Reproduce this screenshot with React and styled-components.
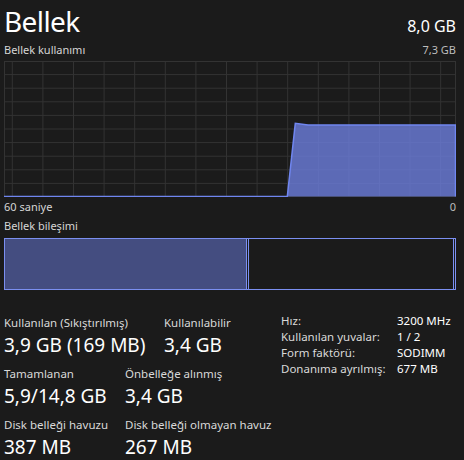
import React from 'react';
import styled, { createGlobalStyle } from 'styled-components';

const GlobalStyle = createGlobalStyle`
  html, body {
    margin: 0;
    background: #1b1b1b;
  }
  body {
    font-family: "Noto Sans", "Open Sans", sans-serif;
    color: #ffffff;
  }
`;

const Panel = styled.div`
  width: 464px;
  height: 460px;
  box-sizing: border-box;
  padding: 0 8px 0 4px;
  background: #1b1b1b;
  overflow: hidden;
`;

const Header = styled.div`
  display: flex;
  justify-content: space-between;
  align-items: baseline;
  height: 40px;
  padding-top: 2px;
`;

const Title = styled.h1`
  margin: 0;
  font-size: 28px;
  font-weight: 400;
  line-height: 38px;
  letter-spacing: -0.6px;
`;

const TotalMemory = styled.span`
  font-size: 16px;
  line-height: 20px;
`;

const CaptionRow = styled.div`
  display: flex;
  justify-content: space-between;
  align-items: baseline;
  font-size: 11px;
  line-height: ${p => p.$height || 16}px;
  color: #d6d6d6;
`;

const Muted = styled.span`
  color: #bdbdbd;
`;

const GraphBox = styled.div`
  width: 452px;
  height: 136px;
  margin-top: 3px;
`;

const Composition = styled.div`
  display: flex;
  width: 452px;
  height: 52px;
  box-sizing: border-box;
  margin-top: 3px;
`;

const Segment = styled.div`
  box-sizing: border-box;
  border: 1px solid #7b8ff0;
  border-left-width: ${p => (p.$first ? 1 : 0)}px;
  background: ${p => p.$fill || 'transparent'};
  width: ${p => (p.$grow ? 'auto' : `${p.$width}px`)};
  flex: ${p => (p.$grow ? 1 : 'none')};
`;

const Stats = styled.div`
  display: flex;
  margin-top: 25px;
`;

const LeftStats = styled.div`
  width: 277px;
  display: flex;
  flex-direction: column;
  gap: 7px;
`;

const StatRow = styled.div`
  display: flex;
`;

const Stat = styled.div`
  width: ${p => p.$width}px;
  display: flex;
  flex-direction: column;
`;

const StatLabel = styled.span`
  font-size: 11.5px;
  line-height: 16px;
  color: #d9d9d9;
  white-space: nowrap;
`;

const StatValue = styled.span`
  font-size: 19px;
  line-height: 28px;
  white-space: nowrap;
`;

const Specs = styled.dl`
  margin: -2px 0 0;
  display: grid;
  grid-template-columns: 116px auto;
  grid-auto-rows: 16px;
  font-size: 11.5px;
  line-height: 16px;
`;

const SpecName = styled.dt`
  color: #d9d9d9;
  white-space: nowrap;
`;

const SpecValue = styled.dd`
  margin: 0;
  color: #ffffff;
  white-space: nowrap;
`;

const UsageGraph = () => {
  const w = 452;
  const h = 136;
  const vLines = Array.from({ length: 15 }, (_, i) => 8.3 + i * 30.6);
  const hLines = Array.from({ length: 9 }, (_, i) => (i + 1) * 13.6);
  const points = `0,${h - 0.5} 283.3,${h - 0.5} 291.3,62.3 304,64 ${w - 0.5},64 ${w - 0.5},${h - 0.5}`;

  return (
    <svg width={w} height={h} viewBox={`0 0 ${w} ${h}`} style={{ display: 'block' }}>
      {vLines.map(x => (
        <line key={`v${x}`} x1={x} y1={0} x2={x} y2={h} stroke="#333333" strokeWidth="1" />
      ))}
      {hLines.map(y => (
        <line key={`h${y}`} x1={0} y1={y} x2={w} y2={y} stroke="#333333" strokeWidth="1" />
      ))}
      <rect x="0.5" y="0.5" width={w - 1} height={h - 1} fill="none" stroke="#333333" />
      <polygon points={points} fill="rgba(110, 128, 225, 0.78)" />
      <polyline points={points} fill="none" stroke="#7086f0" strokeWidth="1.5" />
    </svg>
  );
};

const specs = [
  ['Hız:', '3200 MHz'],
  ['Kullanılan yuvalar:', '1 / 2'],
  ['Form faktörü:', 'SODIMM'],
  ['Donanıma ayrılmış:', '677 MB'],
];

const App = () => (
  <>
    <GlobalStyle />
    <Panel>
      <Header>
        <Title>Bellek</Title>
        <TotalMemory>8,0 GB</TotalMemory>
      </Header>
      <CaptionRow $height={16}>
        <span>Bellek kullanımı</span>
        <Muted>7,3 GB</Muted>
      </CaptionRow>
      <GraphBox>
        <UsageGraph />
      </GraphBox>
      <CaptionRow $height={20}>
        <span>60 saniye</span>
        <Muted>0</Muted>
      </CaptionRow>
      <CaptionRow $height={18}>
        <span>Bellek bileşimi</span>
      </CaptionRow>
      <Composition>
        <Segment $first $width={243} $fill="#444d80" />
        <Segment $width={2} />
        <Segment $grow />
        <Segment $width={2} />
      </Composition>
      <Stats>
        <LeftStats>
          <StatRow>
            <Stat $width={160}>
              <StatLabel>Kullanılan (Sıkıştırılmış)</StatLabel>
              <StatValue>3,9 GB (169 MB)</StatValue>
            </Stat>
            <Stat $width={117}>
              <StatLabel>Kullanılabilir</StatLabel>
              <StatValue>3,4 GB</StatValue>
            </Stat>
          </StatRow>
          <StatRow>
            <Stat $width={121}>
              <StatLabel>Tamamlanan</StatLabel>
              <StatValue>5,9/14,8 GB</StatValue>
            </Stat>
            <Stat $width={156}>
              <StatLabel>Önbelleğe alınmış</StatLabel>
              <StatValue>3,4 GB</StatValue>
            </Stat>
          </StatRow>
          <StatRow>
            <Stat $width={121}>
              <StatLabel>Disk belleği havuzu</StatLabel>
              <StatValue>387 MB</StatValue>
            </Stat>
            <Stat $width={156}>
              <StatLabel>Disk belleği olmayan havuz</StatLabel>
              <StatValue>267 MB</StatValue>
            </Stat>
          </StatRow>
        </LeftStats>
        <Specs>
          {specs.map(([name, value]) => (
            <React.Fragment key={name}>
              <SpecName>{name}</SpecName>
              <SpecValue>{value}</SpecValue>
            </React.Fragment>
          ))}
        </Specs>
      </Stats>
    </Panel>
  </>
);

export default App;
